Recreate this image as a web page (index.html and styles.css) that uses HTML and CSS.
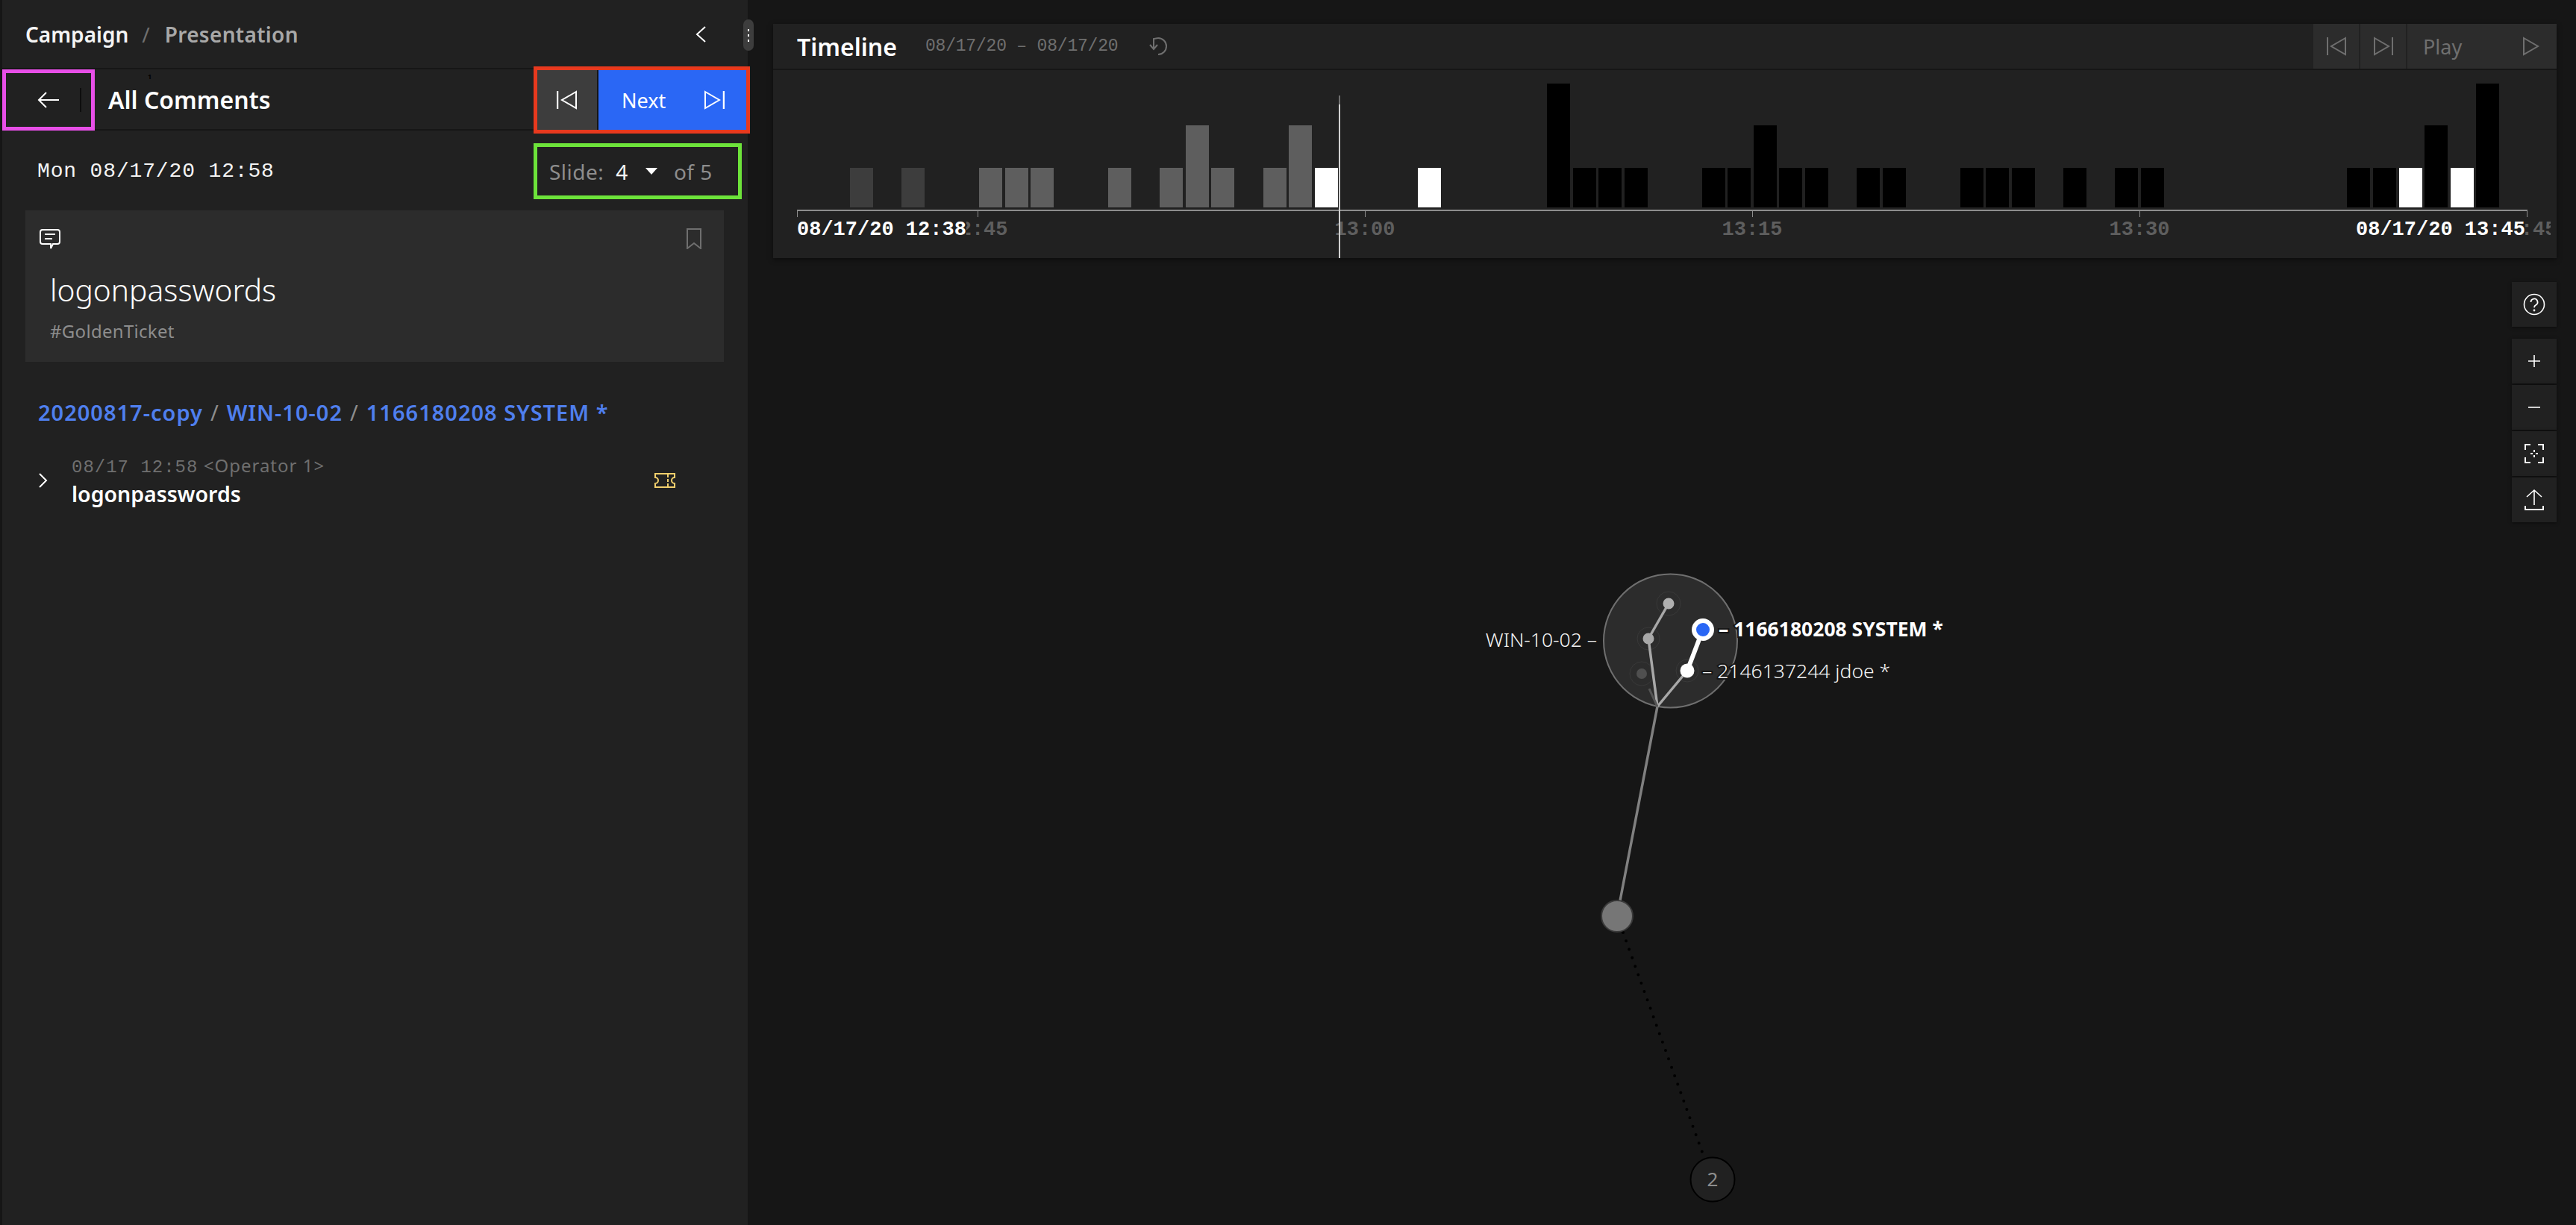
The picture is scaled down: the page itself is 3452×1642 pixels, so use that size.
FILE: index.html
```html
<!DOCTYPE html>
<html lang="en">
<head>
  <meta charset="UTF-8">
  <title>Campaign Presentation</title>
  <link rel="stylesheet" href="styles.css">
</head>
<body>

  <div class="sidebar">
    <div class="side-head">
      <span class="crumb-main">Campaign</span>
      <span class="crumb-sep">/</span>
      <span class="crumb-sub">Presentation</span>
      <svg class="collapse" width="14" height="22" viewBox="0 0 14 22"><path d="M13 1 2 11l11 10" fill="none" stroke="#fff" stroke-width="2"/></svg>
    </div>
    <div class="handle"><i></i><i></i><i></i></div>

    <div class="nav-row">
      <div class="back-box">
        <svg width="30" height="22" viewBox="0 0 30 22"><path d="M12 1 2 11l10 10M2 11h27" fill="none" stroke="#fff" stroke-width="2"/></svg>
        <span class="back-div"></span>
      </div>
      <span class="badge">1</span>
      <div class="nav-title">All Comments</div>
      <div class="nav-btns">
        <div class="btn-prev">
          <svg width="28" height="26" viewBox="0 0 28 26"><path d="M1 1v24" stroke="#fff" stroke-width="2.5"/><path d="M26 2 7 13l19 11z" fill="none" stroke="#fff" stroke-width="2"/></svg>
        </div>
        <div class="btn-next">
          <span>Next</span>
          <svg width="28" height="26" viewBox="0 0 28 26"><path d="M27 1v24" stroke="#fff" stroke-width="2.5"/><path d="M2 2l19 11L2 24z" fill="none" stroke="#fff" stroke-width="2"/></svg>
        </div>
      </div>
    </div>

    <div class="date-row">
      <div class="date">Mon 08/17/20 12:58</div>
      <div class="slide-box">
        <span class="slide-lbl">Slide:</span>
        <span class="slide-num">4</span>
        <span class="caret"></span>
        <span class="slide-lbl">of 5</span>
      </div>
    </div>

    <div class="card">
      <div class="card-top">
        <svg width="30" height="28" viewBox="0 0 30 28"><path d="M5 2h20a3 3 0 0 1 3 3v13a3 3 0 0 1-3 3h-6l-3 6v-6H5a3 3 0 0 1-3-3V5a3 3 0 0 1 3-3z" fill="none" stroke="#fff" stroke-width="2"/><path d="M8 8h14M8 14h10" stroke="#fff" stroke-width="2"/></svg>
        <svg width="20" height="28" viewBox="0 0 20 28"><path d="M1 1h18v26l-9-7-9 7z" fill="none" stroke="#6f6f6f" stroke-width="2"/></svg>
      </div>
      <div class="card-title">logonpasswords</div>
      <div class="card-tag">#GoldenTicket</div>
    </div>

    <div class="path">
      <span>20200817-copy</span><em>/</em><span>WIN-10-02</span><em>/</em><span>1166180208 SYSTEM *</span>
    </div>

    <div class="log-row">
      <svg width="12" height="20" viewBox="0 0 12 20"><path d="M1 1l9 9-9 9" fill="none" stroke="#fff" stroke-width="2"/></svg>
      <div class="log-text">
        <div class="log-meta"><span class="mono">08/17 12:58</span> &lt;Operator 1&gt;</div>
        <div class="log-cmd">logonpasswords</div>
      </div>
      <svg class="ticket" width="28" height="20" viewBox="0 0 28 20"><path d="M1 1h26v5a4 4 0 0 0 0 8v5H1v-5a4 4 0 0 0 0-8z" fill="none" stroke="#f1cf6c" stroke-width="2"/><path d="M18 2v16" stroke="#f1cf6c" stroke-width="2" stroke-dasharray="4 2"/></svg>
    </div>
  </div>

  <div class="main">
    <svg class="graph" width="2450" height="1642" viewBox="1002 0 2450 1642">
      <line x1="2221" y1="947" x2="2167" y2="1228" stroke="#808080" stroke-width="3.5"/>
      <line x1="2175" y1="1250" x2="2282" y2="1547" stroke="#000" stroke-width="4" stroke-linecap="round" stroke-dasharray="0 12"/>
      <circle cx="2238.5" cy="859" r="89.5" fill="#2c2c2c" stroke="#6f6f6f" stroke-width="2"/>
      <circle cx="2236" cy="809" r="16" fill="none" stroke="#393939"/>
      <circle cx="2209" cy="856" r="15" fill="none" stroke="#393939"/>
      <circle cx="2200" cy="903" r="16" fill="none" stroke="#393939"/>
      <circle cx="2261" cy="899" r="15" fill="none" stroke="#393939"/>
      <line x1="2209" y1="856" x2="2221" y2="947" stroke="#a8a8a8" stroke-width="3.5"/>
      <line x1="2209" y1="856" x2="2236" y2="809" stroke="#a8a8a8" stroke-width="3.5"/>
      <line x1="2221" y1="947" x2="2261" y2="899" stroke="#a8a8a8" stroke-width="3.5"/>
      <line x1="2210" y1="923" x2="2221" y2="947" stroke="#555" stroke-width="3"/>
      <line x1="2261" y1="899" x2="2282" y2="844" stroke="#fff" stroke-width="6"/>
      <circle cx="2236" cy="809" r="7.5" fill="#b0b0b0"/>
      <circle cx="2209" cy="856" r="7.5" fill="#a8a8a8"/>
      <circle cx="2200" cy="903" r="7" fill="#4f4f4f"/>
      <circle cx="2261" cy="899" r="9.5" fill="#fff"/>
      <circle cx="2282" cy="844" r="15" fill="#fff"/>
      <circle cx="2282" cy="844" r="9" fill="#2a67f5"/>
      <circle cx="2167" cy="1228" r="21" fill="#767676" stroke="#393939" stroke-width="2"/>
      <circle cx="2295" cy="1581" r="29.5" fill="#212121" stroke="#000" stroke-width="2"/>
      <text class="n-count" x="2295" y="1590" text-anchor="middle">2</text>
      <text class="n-label" x="2140" y="867" text-anchor="end">WIN-10-02 –</text>
      <text class="n-label n-bold" x="2303" y="853">– 1166180208 SYSTEM *</text>
      <text class="n-label" x="2281" y="909">– 2146137244 jdoe *</text>
    </svg>

    <div class="timeline">
      <div class="tl-head">
        <span class="tl-title">Timeline</span>
        <span class="tl-range">08/17/20 – 08/17/20</span>
        <svg class="tl-reset" width="30" height="26" viewBox="0 0 30 26"><path d="M14 2a11 11 0 1 1 0 22" fill="none" stroke="#6f6f6f" stroke-width="2"/><path d="M14 2 8 3v13M3 11l5 6 5-6" fill="none" stroke="#6f6f6f" stroke-width="2"/></svg>
        <div class="tl-btns">
          <div class="tl-btn">
            <svg width="28" height="26" viewBox="0 0 28 26"><path d="M2 1v24" stroke="#6f6f6f" stroke-width="2"/><path d="M26 2 7 13l19 11z" fill="none" stroke="#6f6f6f" stroke-width="2"/></svg>
          </div>
          <div class="tl-btn">
            <svg width="28" height="26" viewBox="0 0 28 26"><path d="M26 1v24" stroke="#6f6f6f" stroke-width="2"/><path d="M2 2l19 11L2 24z" fill="none" stroke="#6f6f6f" stroke-width="2"/></svg>
          </div>
          <div class="tl-play">
            <span>Play</span>
            <svg width="24" height="26" viewBox="0 0 24 26"><path d="M2 2l19 11L2 24z" fill="none" stroke="#6f6f6f" stroke-width="2"/></svg>
          </div>
        </div>
      </div>
      <div class="tl-body">
        <div class="bars">
          <i class="bar b-dim s"></i><i></i><i class="bar b-dim s"></i><i></i><i></i>
          <i class="bar b-gray s"></i><i class="bar b-gray s"></i><i class="bar b-gray s"></i><i></i><i></i>
          <i class="bar b-gray s"></i><i></i>
          <i class="bar b-gray s"></i><i class="bar b-gray m"></i><i class="bar b-gray s"></i><i></i>
          <i class="bar b-gray s"></i><i class="bar b-gray m"></i><i class="bar b-white s"></i>
          <i></i><i></i><i></i>
          <i class="bar b-white s"></i><i></i><i></i><i></i><i></i>
          <i class="bar b-black l"></i><i class="bar b-black s"></i><i class="bar b-black s"></i><i class="bar b-black s"></i><i></i><i></i>
          <i class="bar b-black s"></i><i class="bar b-black s"></i><i class="bar b-black m"></i><i class="bar b-black s"></i><i class="bar b-black s"></i><i></i>
          <i class="bar b-black s"></i><i class="bar b-black s"></i><i></i><i></i>
          <i class="bar b-black s"></i><i class="bar b-black s"></i><i class="bar b-black s"></i><i></i>
          <i class="bar b-black s"></i><i></i>
          <i class="bar b-black s"></i><i class="bar b-black s"></i>
          <i></i><i></i><i></i><i></i><i></i><i></i><i></i>
          <i class="bar b-black s"></i><i class="bar b-black s"></i><i class="bar b-white s"></i><i class="bar b-black m"></i><i class="bar b-white s"></i><i class="bar b-black l"></i>
        </div>
        <div class="scale">
          <div class="scale-line"></div>
          <span class="tick t0"></span><span class="tick t1"></span><span class="tick t2"></span>
          <span class="tick t3"></span><span class="tick t4"></span><span class="tick t5"></span>
          <span class="lbl t1">12:45</span>
          <span class="lbl t2">13:00</span>
          <span class="lbl t3">13:15</span>
          <span class="lbl t4">13:30</span>
          <span class="lbl t5">13:45</span>
          <span class="lbl-start">08/17/20 12:38</span>
          <span class="lbl-end">08/17/20 13:45</span>
        </div>
        <div class="playhead"></div>
      </div>
    </div>

    <div class="tools">
      <div class="tool">
        <svg width="30" height="30" viewBox="0 0 30 30"><circle cx="15" cy="15" r="13.5" fill="none" stroke="#fff" stroke-width="1.6"/><path d="M10.5 12a4.5 4.5 0 1 1 6.8 3.8c-1.5.9-2.3 1.6-2.3 3.4" fill="none" stroke="#fff" stroke-width="1.8"/><circle cx="15" cy="23" r="1.4" fill="#fff"/></svg>
      </div>
      <div class="tool-stack">
        <div class="tool">
          <svg width="18" height="18" viewBox="0 0 18 18"><path d="M9 1v16M1 9h16" stroke="#fff" stroke-width="1.6"/></svg>
        </div>
        <div class="tool">
          <svg width="18" height="18" viewBox="0 0 18 18"><path d="M1 9h16" stroke="#fff" stroke-width="1.6"/></svg>
        </div>
        <div class="tool">
          <svg width="26" height="26" viewBox="0 0 26 26"><path d="M1 8V1h7M18 1h7v7M25 18v7h-7M8 25H1v-7" fill="none" stroke="#fff" stroke-width="2"/><path d="M13 8v3M13 15v3M8 13h3M15 13h3" stroke="#fff" stroke-width="2"/></svg>
        </div>
        <div class="tool">
          <svg width="26" height="30" viewBox="0 0 26 30"><path d="M3 11 13 2l10 9M13 2v20" fill="none" stroke="#fff" stroke-width="1.6"/><path d="M1 23v5h24v-5" fill="none" stroke="#fff" stroke-width="2"/></svg>
        </div>
      </div>
    </div>
  </div>

</body>
</html>
```

FILE: styles.css
```css
body {
  margin: 0;
  background: #161616;
  color: white;
  font-family: "Noto Sans", sans-serif;
  display: flex;
  height: 1642px;
  overflow: hidden;
}
.sidebar {
  position: relative;
  box-sizing: border-box;
  width: 1002px;
  flex: none;
  background: #212121;
  border-left: 3px solid #161616;
}
.side-head {
  height: 91px;
  display: flex;
  align-items: center;
  padding: 0 56px 0 31px;
  font-size: 28px;
  font-weight: 600;
}
.crumb-main {
  color: #f4f4f4;
}
.crumb-sep {
  margin: 0 20px 0 18px;
  color: #6f6f6f;
  font-weight: 400;
}
.crumb-sub {
  color: #a8a8a8;
  letter-spacing: 0.3px;
}
.collapse {
  margin-left: auto;
}
.handle {
  position: absolute;
  left: 993px;
  top: 26px;
  width: 14px;
  height: 42px;
  border-radius: 7px;
  background: #3d3d3d;
  display: flex;
  flex-direction: column;
  align-items: center;
  justify-content: center;
  gap: 4px;
}
.handle i {
  width: 2px;
  height: 3px;
  background: white;
}
.nav-row {
  box-sizing: border-box;
  position: relative;
  height: 84px;
  display: flex;
  align-items: center;
  border-top: 2px solid #161616;
  border-bottom: 2px solid #161616;
}
.back-box {
  box-sizing: border-box;
  width: 124px;
  height: 82px;
  margin-bottom: -2px;
  padding-left: 42px;
  display: flex;
  align-items: center;
  border: 5px solid #e84fe8;
}
.back-div {
  width: 2px;
  height: 32px;
  margin-left: 27px;
  background: #0d0d0d;
}
.badge {
  position: absolute;
  left: 195px;
  top: 3px;
  font-size: 9px;
  font-weight: 700;
  color: black;
}
.nav-title {
  margin-left: 18px;
  font-size: 32px;
  font-weight: 600;
}
.nav-btns {
  box-sizing: border-box;
  position: absolute;
  left: 712px;
  top: -4px;
  width: 290px;
  height: 90px;
  display: flex;
  border: 5px solid #e8391e;
}
.btn-prev {
  width: 80px;
  display: flex;
  align-items: center;
  justify-content: center;
  background: #3d3d3d;
  border-right: 2px solid #161616;
}
.btn-next {
  flex: 1;
  display: flex;
  align-items: center;
  justify-content: space-between;
  padding: 0 29px 0 31px;
  background: #2a67f5;
  font-size: 27px;
}
.date-row {
  height: 107px;
  display: flex;
  align-items: center;
  justify-content: space-between;
  padding: 2px 5px 0 47px;
  box-sizing: border-box;
}
.date {
  font-family: "Liberation Mono", monospace;
  font-size: 28px;
  letter-spacing: 0.85px;
  color: #f4f4f4;
}
.slide-box {
  box-sizing: border-box;
  width: 279px;
  height: 75px;
  margin-right: 3px;
  padding-left: 16px;
  display: flex;
  align-items: center;
  border: 5px solid #6de33a;
  font-size: 28px;
  letter-spacing: 0.5px;
}
.slide-lbl {
  color: #8d8d8d;
}
.slide-num {
  margin-left: 16px;
  color: #f4f4f4;
}
.caret {
  margin: 0 22px 0 23px;
  border-left: 8px solid transparent;
  border-right: 8px solid transparent;
  border-top: 9px solid white;
}
.card {
  box-sizing: border-box;
  width: 936px;
  height: 203px;
  margin-left: 31px;
  padding: 24px 30px 0 18px;
  background: #2c2c2c;
}
.card-top {
  display: flex;
  justify-content: space-between;
  align-items: flex-start;
  height: 54px;
}
.card-title {
  margin: 0 0 0 15px;
  font-size: 40.7px;
  font-weight: 300;
  line-height: 56px;
}
.card-tag {
  margin: 12px 0 0 15px;
  font-size: 24px;
  letter-spacing: 0.3px;
  line-height: 32px;
  color: #8d8d8d;
}
.path {
  margin: 48px 0 0 48px;
  font-size: 29px;
  font-weight: 600;
  letter-spacing: 1px;
  line-height: 40px;
  color: #4f7fee;
}
.path em {
  margin: 0 10px;
  font-style: normal;
  font-weight: 400;
  color: #8d8d8d;
}
.log-row {
  display: flex;
  align-items: center;
  margin: 34px 0 0 49px;
  width: 853px;
}
.log-text {
  flex: 1;
  margin-left: 32px;
}
.log-meta {
  font-size: 24px;
  letter-spacing: 1px;
  line-height: 34px;
  color: #6f6f6f;
}
.mono {
  font-family: "Liberation Mono", monospace;
}
.log-cmd {
  font-size: 28.5px;
  font-weight: 600;
  line-height: 36px;
}
.main {
  position: relative;
  flex: 1;
}
.graph {
  position: absolute;
  left: 0;
  top: 0;
}
.n-label {
  font-family: "Noto Sans", sans-serif;
  font-size: 26.5px;
  font-weight: 300;
  fill: #f4f4f4;
  paint-order: stroke;
  stroke: #161616;
  stroke-width: 4px;
}
.n-bold {
  font-weight: 700;
  fill: white;
}
.n-count {
  font-family: "Noto Sans", sans-serif;
  font-size: 26px;
  fill: #8d8d8d;
}
.timeline {
  position: relative;
  box-sizing: border-box;
  height: 314px;
  margin: 32px 26px 0 34px;
  background: #212121;
  box-shadow: 0 2px 6px rgba(0, 0, 0, 0.5);
  overflow: hidden;
}
.tl-head {
  box-sizing: border-box;
  height: 62px;
  display: flex;
  align-items: center;
  padding-left: 32px;
  border-bottom: 2px solid #161616;
}
.tl-title {
  font-size: 32px;
  font-weight: 600;
}
.tl-range {
  margin-left: 38px;
  font-family: "Liberation Mono", monospace;
  font-size: 23px;
  letter-spacing: -0.2px;
  color: #6f6f6f;
}
.tl-reset {
  margin-left: 40px;
}
.tl-btns {
  margin-left: auto;
  height: 60px;
  display: flex;
  gap: 2px;
  align-self: flex-start;
}
.tl-btn {
  width: 61px;
  display: flex;
  align-items: center;
  justify-content: center;
  background: #2c2c2c;
}
.tl-play {
  box-sizing: border-box;
  width: 200px;
  display: flex;
  align-items: center;
  justify-content: space-between;
  padding: 0 22px 0 21px;
  background: #2c2c2c;
  font-size: 27px;
  color: #6f6f6f;
}
.tl-body {
  position: relative;
}
.bars {
  height: 166px;
  margin-top: 18px;
  padding-left: 103px;
  display: flex;
  align-items: flex-end;
  gap: 3.6px;
}
.bars i {
  flex: none;
  width: 31px;
}
.bars .bar.s {
  height: 53px;
}
.bars .bar.m {
  height: 110px;
}
.bars .bar.l {
  height: 166px;
}
.b-dim {
  background: #3d3d3d;
}
.b-gray {
  background: #5e5e5e;
}
.b-black {
  background: black;
}
.b-white {
  background: white;
}
.scale {
  position: relative;
  height: 60px;
  width: 2350px;
  margin: 3px 0 0 32px;
  overflow: hidden;
}
.scale-line {
  width: 2318px;
  height: 2px;
  background: #8d8d8d;
}
.tick {
  position: absolute;
  top: 0;
  width: 1px;
  height: 10px;
  background: #8d8d8d;
}
.lbl,
.lbl-start,
.lbl-end {
  position: absolute;
  top: 10px;
  font-family: "Liberation Mono", monospace;
  font-size: 27px;
  font-weight: 700;
  line-height: 34px;
  white-space: nowrap;
}
.lbl {
  color: #5e5e5e;
  transform: translateX(-50%);
}
.lbl-start,
.lbl-end {
  color: white;
  background: #212121;
}
.lbl-start {
  left: 0;
}
.lbl-end {
  left: 2089px;
}
.t0 { left: 0; }
.t1 { left: 242px; }
.t2 { left: 761px; }
.t3 { left: 1280px; }
.t4 { left: 1799px; }
.t5 { left: 2318px; }
.playhead {
  position: absolute;
  left: 758px;
  top: 16px;
  width: 2px;
  height: 220px;
  background: linear-gradient(#6f6f6f 12px, #d0d0d0 12px);
}
.tools {
  position: absolute;
  right: 26px;
  top: 378px;
  display: flex;
  flex-direction: column;
  gap: 16px;
}
.tool-stack {
  display: flex;
  flex-direction: column;
  gap: 2px;
}
.tool {
  width: 60px;
  height: 60px;
  display: flex;
  align-items: center;
  justify-content: center;
  background: #212121;
  box-shadow: 0 1px 4px rgba(0, 0, 0, 0.5);
}
```
